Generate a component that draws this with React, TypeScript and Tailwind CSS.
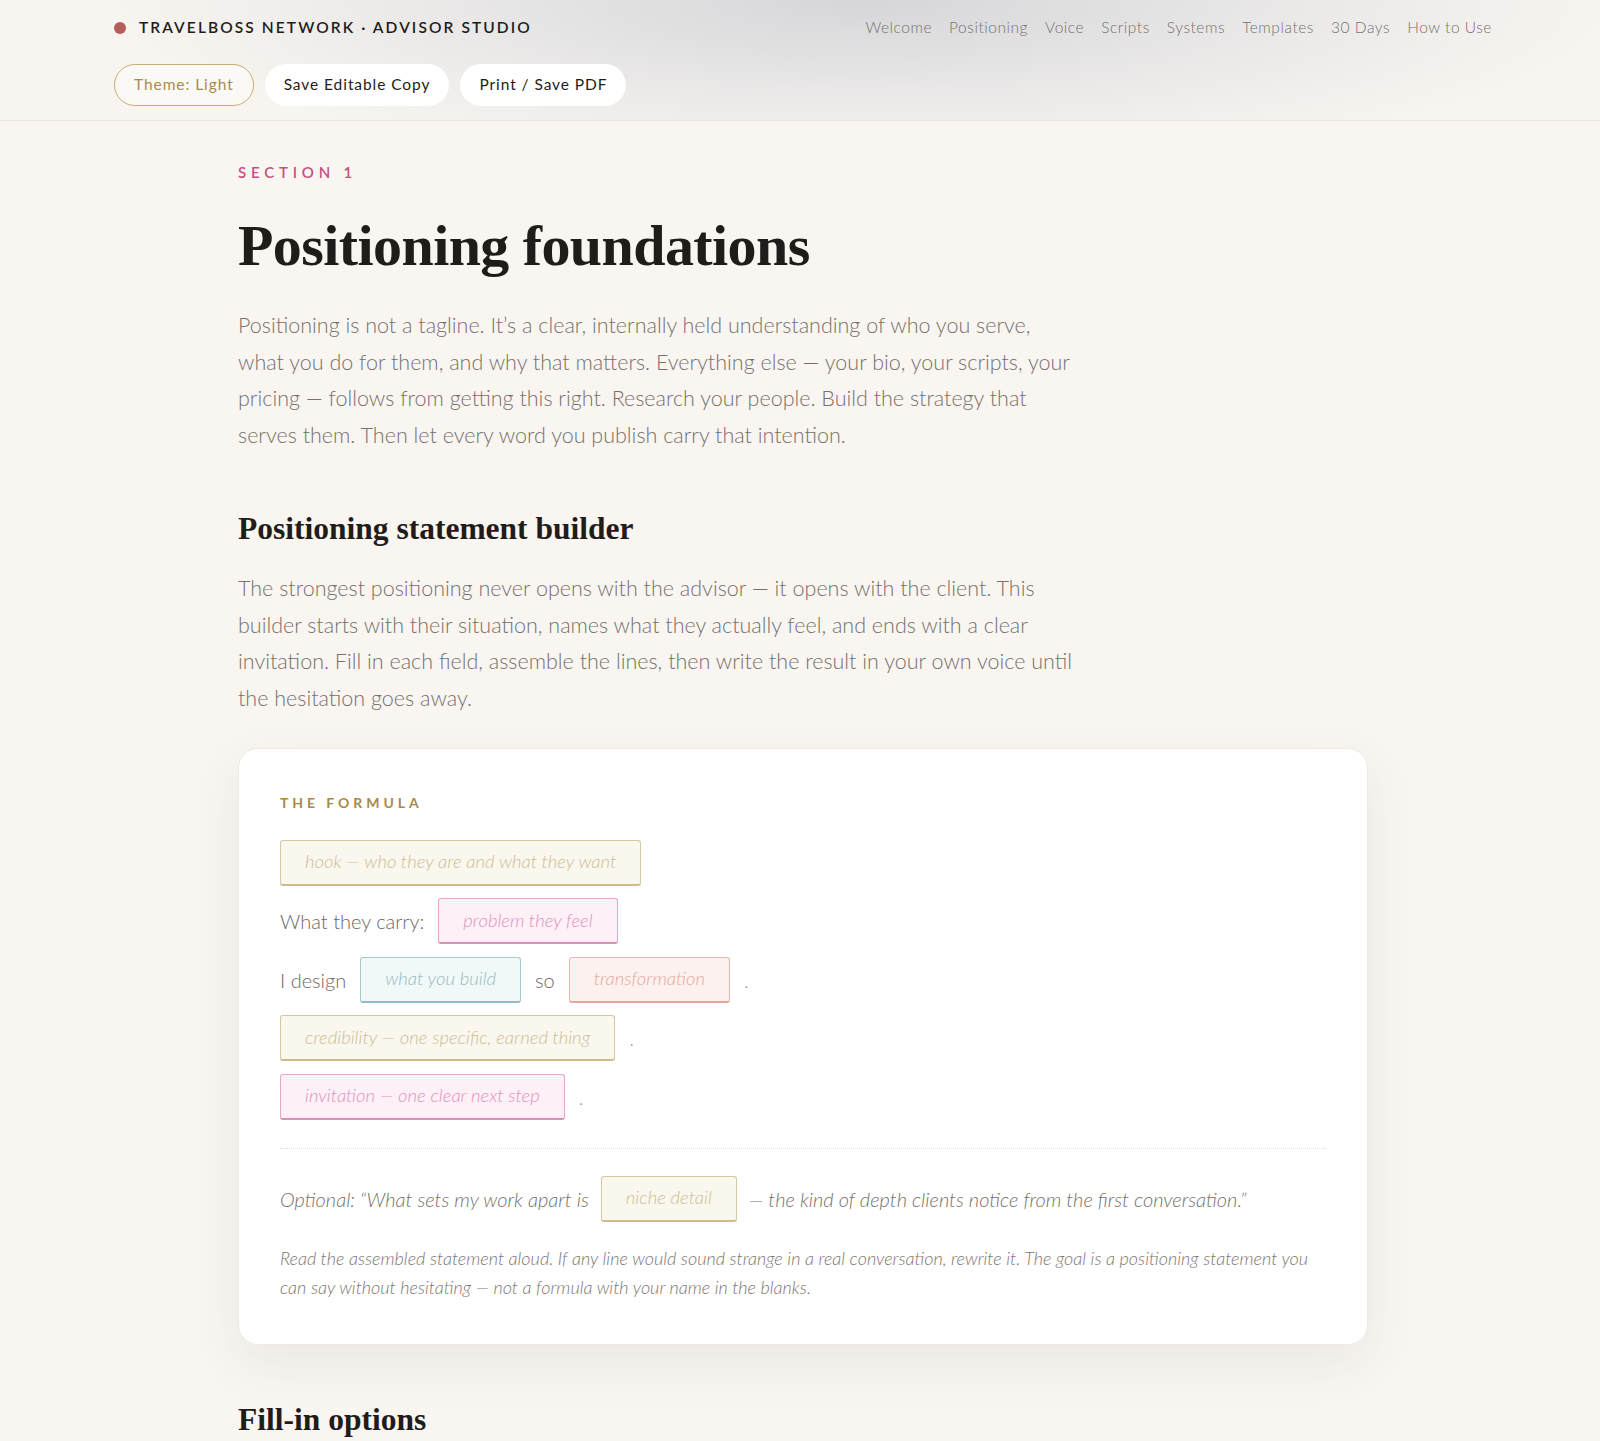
import React from "react";

const navItems = ["Welcome", "Positioning", "Voice", "Scripts", "Systems", "Templates", "30 Days", "How to Use"];

type Tone = "gold" | "pink" | "teal" | "salmon";

const toneClass: Record<Tone, string> = {
  gold: "border-[#d8c8a0] border-b-[#cdbb8c] bg-[#faf7ef] text-[#cdbd92]",
  pink: "border-[#e6a6c8] border-b-[#dc8fba] bg-[#fdf0f7] text-[#e290bd]",
  teal: "border-[#a8cacd] border-b-[#93bcc0] bg-[#f1f8f8] text-[#94bcbf]",
  salmon: "border-[#ebb8b0] border-b-[#e3a59c] bg-[#fdf1ef] text-[#e6a79e]",
};

function Blank({ tone, children }: { tone: Tone; children: React.ReactNode }) {
  return (
    <span
      className={`inline-flex h-[46px] items-center rounded-[3px] border border-b-2 border-b-dotted px-[24px] text-[18.5px] font-light italic ${toneClass[tone]}`}
    >
      {children}
    </span>
  );
}

export default function App() {
  const body = "font-['Lato','Noto_Sans',sans-serif]";
  const serif = "font-['Liberation_Serif','DejaVu_Serif',serif]";
  return (
    <div className={`min-h-[1441px] bg-[#f9f6f2] ${body} text-[#6e6763]`}>
      <header className="h-[121px] border-b border-[#ece6de] bg-[#f8f5f0] bg-[radial-gradient(ellipse_760px_170px_at_54%_0%,rgba(210,210,214,0.9),rgba(220,220,224,0.45)_60%,transparent_100%)]">
        <div className="flex flex-col px-[114px] pt-[16px]">
          <div className="flex h-[24px] items-center justify-between">
            <div className="flex items-center gap-[13px]">
              <span className="h-[12px] w-[12px] rounded-full bg-[#b45e5c]" />
              <span className="text-[15.5px] font-semibold tracking-[0.135em] text-[#1f1c1a]">
                TRAVELBOSS NETWORK · ADVISOR STUDIO
              </span>
            </div>
            <nav className="mr-[-6px] flex items-center gap-[17px] text-[15.5px] font-light tracking-[0.035em] text-[#77716c]">
              {navItems.map((n) => (
                <span key={n}>{n}</span>
              ))}
            </nav>
          </div>
          <div className="mt-[24px] flex items-center gap-[11px]">
            <button className="h-[42px] rounded-full border border-[#c9ad74] bg-[#fbf9f5] px-[19px] text-[15.5px] tracking-[0.06em] text-[#a98b50]">
              Theme: Light
            </button>
            <button className="h-[42px] rounded-full bg-white px-[19px] text-[15.5px] tracking-[0.06em] text-[#1f1c1a]">
              Save Editable Copy
            </button>
            <button className="h-[42px] rounded-full bg-white px-[19px] text-[15.5px] tracking-[0.06em] text-[#1f1c1a]">
              Print / Save PDF
            </button>
          </div>
        </div>
      </header>

      <main className="ml-[238px] w-[1130px] pt-[42px]">
        <div className="text-[15px] font-semibold leading-[18px] tracking-[0.32em] text-[#c7507f]">SECTION 1</div>
        <h1 className={`${serif} mt-[30px] text-[58px] font-bold leading-[70px] tracking-[-0.01em] text-[#1f1c1a]`}>
          Positioning foundations
        </h1>
        <p className="mt-[26px] max-w-[840px] text-[21.5px] font-light leading-[36.7px] text-[#77706b]">
          Positioning is not a tagline. It’s a clear, internally held understanding of who you serve, what you do for
          them, and why that matters. Everything else — your bio, your scripts, your pricing — follows from getting
          this right. Research your people. Build the strategy that serves them. Then let every word you publish carry
          that intention.
        </p>

        <h2 className={`${serif} mt-[55px] text-[31.5px] font-bold leading-[40px] text-[#1f1c1a]`}>
          Positioning statement builder
        </h2>
        <p className="mt-[21px] max-w-[840px] text-[21.5px] font-light leading-[36.7px] text-[#77706b]">
          The strongest positioning never opens with the advisor — it opens with the client. This builder starts with
          their situation, names what they actually feel, and ends with a clear invitation. Fill in each field,
          assemble the lines, then write the result in your own voice until the hesitation goes away.
        </p>

        <section className="mt-[31px] rounded-[20px] border border-[#efe9e2] bg-white px-[41px] pb-[42px] pt-[45px] shadow-[0_18px_50px_rgba(80,60,40,0.08)]">
          <div className="text-[14px] font-bold leading-[18px] tracking-[0.28em] text-[#a88a48]">THE FORMULA</div>
          <div className="mt-[28px] flex flex-col gap-[12.5px] text-[20px] font-light text-[#6e6763]">
            <div className="flex items-center">
              <Blank tone="gold">hook — who they are and what they want</Blank>
            </div>
            <div className="flex items-center gap-[14px]">
              <span>What they carry:</span>
              <Blank tone="pink">problem they feel</Blank>
            </div>
            <div className="flex items-center gap-[14px]">
              <span>I design</span>
              <Blank tone="teal">what you build</Blank>
              <span>so</span>
              <Blank tone="salmon">transformation</Blank>
              <span className="text-[#9a948f]">.</span>
            </div>
            <div className="flex items-center gap-[14px]">
              <Blank tone="gold">credibility — one specific, earned thing</Blank>
              <span className="text-[#9a948f]">.</span>
            </div>
            <div className="flex items-center gap-[14px]">
              <Blank tone="pink">invitation — one clear next step</Blank>
              <span className="text-[#9a948f]">.</span>
            </div>
          </div>

          <div className="mt-[28px] border-t border-dotted border-[#e4ded6]" />

          <div className="mt-[27px] flex items-center gap-[12px] text-[20px] font-light italic text-[#77706b]">
            <span>Optional: “What sets my work apart is</span>
            <Blank tone="gold">niche detail</Blank>
            <span>— the kind of depth clients notice from the first conversation.”</span>
          </div>

          <p className="mt-[22px] text-[18px] font-light italic leading-[29px] text-[#7d7671]">
            Read the assembled statement aloud. If any line would sound strange in a real conversation, rewrite it. The
            goal is a positioning statement you can say without hesitating — not a formula with your name in the blanks.
          </p>
        </section>

        <h2 className={`${serif} mt-[55px] text-[31.5px] font-bold leading-[40px] text-[#1f1c1a]`}>Fill-in options</h2>
      </main>
    </div>
  );
}
